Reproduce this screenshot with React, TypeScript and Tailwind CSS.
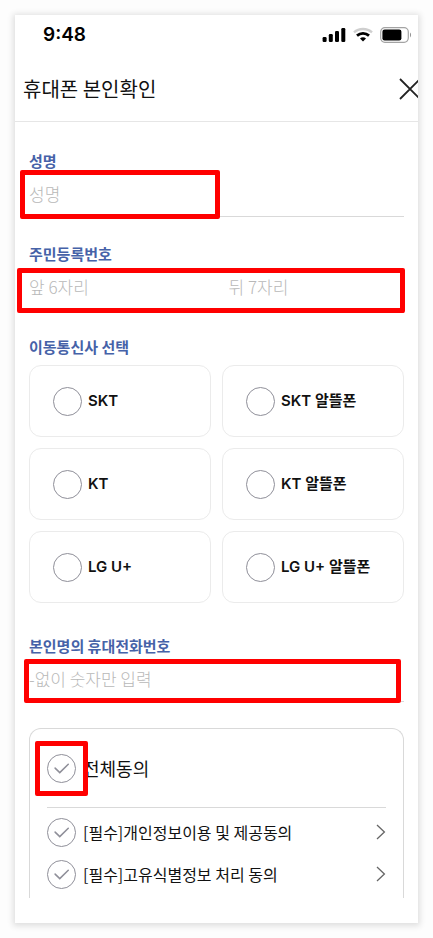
import { useState } from 'react';
import type { ReactNode } from 'react';
import clsx from 'clsx';

const carriers = ['SKT', 'SKT 알뜰폰', 'KT', 'KT 알뜰폰', 'LG U+', 'LG U+ 알뜰폰'];

const terms = [
  { id: 'privacy', label: '[필수]개인정보이용 및 제공동의' },
  { id: 'identity', label: '[필수]고유식별정보 처리 동의' },
];

const inputClass =
  'h-11 w-full min-w-0 border-b border-[#d9d9d9] bg-transparent pb-0.5 text-[17px] font-light text-[#111111] placeholder:text-[#b8b8b8] outline-none';

const labelClass = 'block h-6 text-[15px] leading-6 font-bold text-[#4662a8]';

// Red frame that points out where the user has to act
const Highlight = ({ className }: { className: string }) => (
  <div
    className={clsx(
      'pointer-events-none absolute rounded-xs border-5 border-[#ff0000]',
      className
    )}
  />
);

const StatusBar = () => (
  <div className="flex h-10 items-center justify-between pr-1.5 pl-7">
    <span className="font-['Inter'] text-[19px] leading-6 font-semibold text-black">
      9:48
    </span>
    <div className="flex items-center gap-[7px]">
      <svg width="24" height="16" viewBox="0 0 24 16" fill="#000">
        <rect x="0.6" y="10" width="4" height="5" rx="1.2" />
        <rect x="6.8" y="7" width="4" height="8" rx="1.2" />
        <rect x="13" y="4" width="4" height="11" rx="1.2" />
        <rect x="19.3" y="1" width="4" height="14" rx="1.2" />
      </svg>
      <svg width="20" height="16" viewBox="0 0 20 16" fill="none">
        <path d="M1 5.4C6 .8 14 .8 19 5.4" stroke="#cfcfcf" strokeWidth="2.4" />
        <path d="M4 8.6C7.5 5.6 12.5 5.6 16 8.6" stroke="#000" strokeWidth="2.8" />
        <path d="M7 11.4C8.7 9.9 11.3 9.9 13 11.4L10 14.6Z" fill="#000" />
      </svg>
      <svg width="32" height="16" viewBox="0 0 32 16" fill="none">
        <rect x=".7" y=".7" width="27.6" height="14.6" rx="4.2" stroke="#a3a3a3" strokeWidth="1.2" />
        <rect x="2.4" y="2.6" width="19" height="10.8" rx="2.2" fill="#000" />
        <path d="M30 5.6C31.4 6.4 31.4 9.6 30 10.4Z" fill="#8f8f8f" />
      </svg>
    </div>
  </div>
);

type RoundCheckProps = {
  id: string;
  checked: boolean;
  onChange: () => void;
  children?: ReactNode;
};

const RoundCheck = ({ id, checked, onChange, children }: RoundCheckProps) => (
  <div className="relative size-[29px] shrink-0">
    <input
      id={id}
      type="checkbox"
      checked={checked}
      onChange={onChange}
      className="peer block size-[29px] appearance-none rounded-full border border-[#8f8f99] checked:border-[#4662a8]"
    />
    <svg
      viewBox="0 0 30 30"
      fill="none"
      className="pointer-events-none absolute inset-0 text-[#8f8f99] peer-checked:text-[#4662a8]"
    >
      <path
        d="M8.4 14.6L13.2 19.2L22 10.6"
        stroke="currentColor"
        strokeWidth="1.6"
        strokeLinecap="round"
      />
    </svg>
    {children}
  </div>
);

export default function App() {
  const [carrier, setCarrier] = useState('');
  const [agreed, setAgreed] = useState<string[]>([]);
  const allAgreed = agreed.length === terms.length;

  const toggle = (id: string) =>
    setAgreed((prev) =>
      prev.includes(id) ? prev.filter((v) => v !== id) : [...prev, id]
    );

  return (
    <div className="bg-[#fdfdfd] p-[15px] font-['Noto_Sans_CJK_KR',sans-serif]">
      <main className="overflow-hidden bg-white pb-[25px] shadow-[0_1px_6px_2px_rgba(0,0,0,0.12)]">
        <StatusBar />
        <header className="flex h-[67px] items-center justify-between overflow-hidden border-b border-[#e6e6e6] pt-0.5 pl-2">
          <h1 className="text-xl leading-8 text-[#111111]">휴대폰 본인확인</h1>
          <button type="button" aria-label="닫기" className="-mr-1">
            <svg width="24" height="24" viewBox="0 0 24 24" fill="none">
              <path d="M2 2L22 22M22 2L2 22" stroke="#222" strokeWidth="1.8" />
            </svg>
          </button>
        </header>

        <form className="px-3.5 pt-[27px]">
          <div className="relative mb-[25px]">
            <label htmlFor="name" className={labelClass}>
              성명
            </label>
            <input id="name" placeholder="성명" className={inputClass} />
            <Highlight className="top-[21px] -bottom-0.5 -left-[9px] w-[200px]" />
          </div>

          <div className="relative mb-[25px]">
            <label htmlFor="rrn-front" className={labelClass}>
              주민등록번호
            </label>
            <div className="grid grid-cols-2 gap-6">
              <input
                id="rrn-front"
                inputMode="numeric"
                maxLength={6}
                placeholder="앞 6자리"
                className={inputClass}
              />
              <input
                type="password"
                aria-label="주민등록번호 뒤 7자리"
                inputMode="numeric"
                maxLength={7}
                placeholder="뒤 7자리"
                className={inputClass}
              />
            </div>
            <Highlight className="top-[26px] -right-px -bottom-[3px] -left-3" />
          </div>

          <fieldset className="mb-[31px]">
            <legend className={labelClass}>이동통신사 선택</legend>
            <div className="grid grid-cols-2 gap-[11px] pt-1.5">
              {carriers.map((name) => (
                <label
                  key={name}
                  className="flex h-[72px] items-center gap-1.5 rounded-xl border border-[#ebebeb] pl-[23px]"
                >
                  <input
                    type="radio"
                    name="carrier"
                    value={name}
                    checked={carrier === name}
                    onChange={() => setCarrier(name)}
                    className="size-[29px] shrink-0 appearance-none rounded-full border border-[#8f8f99] checked:border-8 checked:border-[#4662a8]"
                  />
                  <span className="font-['Inter','Noto_Sans_CJK_KR',sans-serif] text-[15px] leading-6 font-semibold text-[#111111]">
                    {name}
                  </span>
                </label>
              ))}
            </div>
          </fieldset>

          <div className="relative mb-[26px]">
            <label htmlFor="phone" className={labelClass}>
              본인명의 휴대전화번호
            </label>
            <input
              id="phone"
              type="tel"
              placeholder="-없이 숫자만 입력"
              className={inputClass}
            />
            <Highlight className="top-[25px] right-[3px] -bottom-px -left-[5px]" />
          </div>

          <section className="rounded-t-xl border border-b-0 border-[#d9d9d9] px-[17px] pb-[3px] text-[#111111]">
            <div className="mb-[3px] flex h-[79px] items-center gap-[7px] border-b border-[#d9d9d9]">
              <RoundCheck
                id="all"
                checked={allAgreed}
                onChange={() => setAgreed(allAgreed ? [] : terms.map((t) => t.id))}
              >
                <Highlight className="-inset-x-3 -inset-y-[13px]" />
              </RoundCheck>
              <label htmlFor="all" className="text-lg leading-6">
                전체동의
              </label>
            </div>
            {terms.map(({ id, label }) => (
              <div key={id} className="flex h-[42px] items-center gap-[7px]">
                <RoundCheck
                  id={id}
                  checked={agreed.includes(id)}
                  onChange={() => toggle(id)}
                />
                <label htmlFor={id} className="text-base leading-6">
                  {label}
                </label>
                <button type="button" aria-label="자세히 보기" className="ml-auto">
                  <svg width="10" height="16" viewBox="0 0 10 16" fill="none">
                    <path d="M1 1L8.4 8L1 15" stroke="#666" strokeWidth="1.3" />
                  </svg>
                </button>
              </div>
            ))}
          </section>
        </form>
      </main>
    </div>
  );
}
